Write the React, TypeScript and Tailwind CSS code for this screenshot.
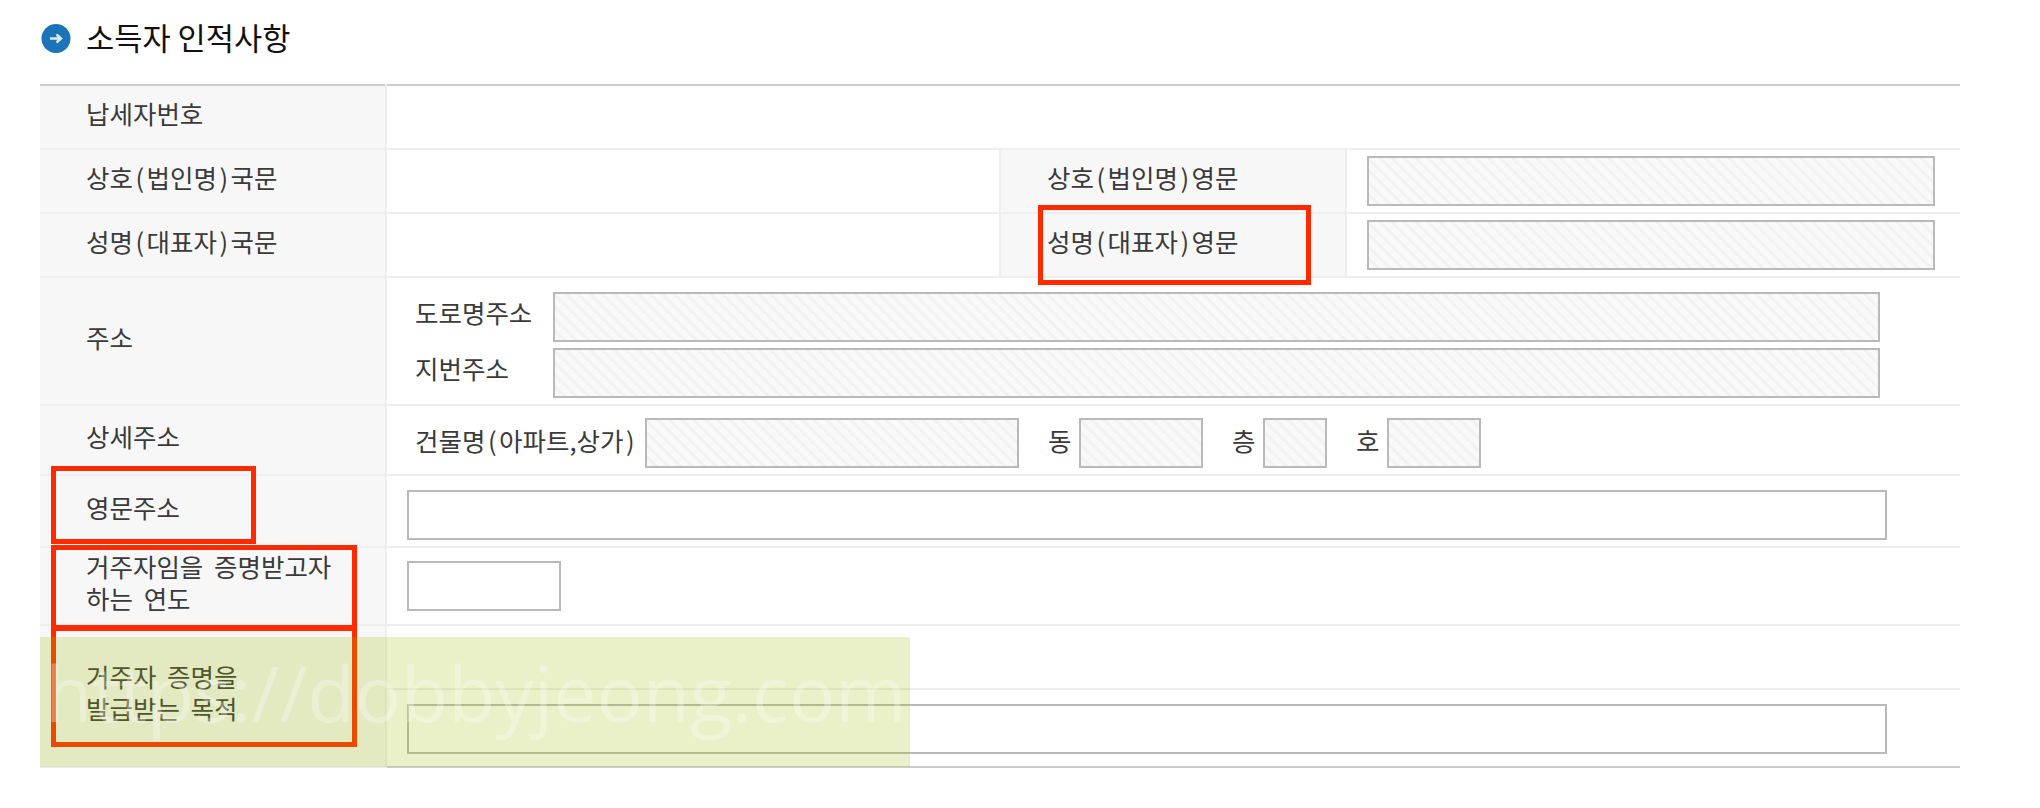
import React from 'react';

const labelFont = "font-['Noto_Sans_CJK_KR','Noto_Sans',sans-serif]";

const Hatched = ({ className }: { className: string }) => (
  <div
    className={`h-[50px] border-2 border-[#b9b9b9] bg-[repeating-linear-gradient(45deg,#f9f9f9_0px,#f9f9f9_4px,#f1f1f1_6px,#f1f1f1_7px,#f9f9f9_8.5px)] ${className}`}
  />
);

const Plain = ({ className }: { className: string }) => (
  <div className={`h-[50px] border-2 border-[#b9b9b9] bg-white ${className}`} />
);

const Paren = ({ children }: { children: React.ReactNode }) => <span className="mx-[2.5px]">{children}</span>;

const Label = ({ children, rowSpan, colSpan }: { children: React.ReactNode; rowSpan?: number; colSpan?: number }) => (
  <th
    rowSpan={rowSpan}
    colSpan={colSpan}
    className="border-r-2 border-b-2 border-[#eeeeee] bg-[#f7f7f7] pb-[9px] pl-[46px] text-left align-middle font-normal [word-spacing:5px]"
  >
    {children}
  </th>
);

const Cell = ({ children, colSpan, rowSpan }: { children?: React.ReactNode; colSpan?: number; rowSpan?: number }) => (
  <td colSpan={colSpan} rowSpan={rowSpan} className="border-b-2 border-[#eeeeee] align-middle">
    {children}
  </td>
);

// 파란 원 + 화살표 아이콘
const TitleIcon = () => (
  <svg width="30" height="30" viewBox="0 0 30 30" className="shrink-0">
    <circle cx="15" cy="15.5" r="14.5" fill="#1c74b8" />
    <path d="M9 15.5h10M15.5 11.5l4.5 4-4.5 4" fill="none" stroke="#dbe9f5" strokeWidth="2.4" />
  </svg>
);

export default function App() {
  return (
    <div className={`relative h-[808px] w-[2040px] overflow-hidden bg-white text-[25.5px] leading-[32px] text-[#3a3a3a] ${labelFont}`}>
      <div className="flex items-center gap-[15px] pt-[22px] pl-[41px]">
        <TitleIcon />
        <h2 className="pb-[2px] text-[30.7px] leading-[30px] font-normal text-[#111111]">소득자 인적사항</h2>
      </div>

      <table className="mt-[30px] ml-[40px] w-[1920px] table-fixed border-collapse border-t-2 border-[#cccccc]">
        <colgroup>
          <col className="w-[346px]" />
          <col className="w-[614px]" />
          <col className="w-[346px]" />
          <col className="w-[614px]" />
        </colgroup>
        <tbody>
          <tr className="h-[64px]">
            <Label>납세자번호</Label>
            <Cell colSpan={3} />
          </tr>
          <tr className="h-[64px]">
            <Label>
              상호<Paren>(</Paren>법인명<Paren>)</Paren>국문
            </Label>
            <Cell />
            <th className="border-x-2 border-b-2 border-[#eeeeee] bg-[#f7f7f7] pb-[9px] pl-[46px] text-left font-normal">
              상호<Paren>(</Paren>법인명<Paren>)</Paren>영문
            </th>
            <Cell>
              <Hatched className="ml-[20px] w-[568px]" />
            </Cell>
          </tr>
          <tr className="h-[64px]">
            <Label>
              성명<Paren>(</Paren>대표자<Paren>)</Paren>국문
            </Label>
            <Cell />
            <th className="border-x-2 border-b-2 border-[#eeeeee] bg-[#f7f7f7] pb-[9px] pl-[46px] text-left font-normal">
              성명<Paren>(</Paren>대표자<Paren>)</Paren>영문
            </th>
            <Cell>
              <Hatched className="ml-[20px] w-[568px]" />
            </Cell>
          </tr>
          <tr className="h-[128px]">
            <Label>주소</Label>
            <Cell colSpan={3}>
              <div className="flex flex-col gap-[6px] pt-[7px] pl-[28px]">
                <div className="flex items-center">
                  <span className="w-[138px] pb-[9px]">도로명주소</span>
                  <Hatched className="w-[1327px]" />
                </div>
                <div className="flex items-center">
                  <span className="w-[138px] pb-[9px]">지번주소</span>
                  <Hatched className="w-[1327px]" />
                </div>
              </div>
            </Cell>
          </tr>
          <tr className="h-[70px]">
            <Label>상세주소</Label>
            <Cell colSpan={3}>
              <div className="flex items-center pt-[6px] pl-[28px]">
                <span className="w-[230px] pb-[6px] whitespace-nowrap">
                  건물명<Paren>(</Paren>아파트,상가<Paren>)</Paren>
                </span>
                <Hatched className="w-[374px]" />
                <span className="w-[60px] pb-[6px] pl-[29px]">동</span>
                <Hatched className="w-[124px]" />
                <span className="w-[60px] pb-[6px] pl-[29px]">층</span>
                <Hatched className="w-[64px]" />
                <span className="w-[60px] pb-[6px] pl-[29px]">호</span>
                <Hatched className="w-[94px]" />
              </div>
            </Cell>
          </tr>
          <tr className="h-[72px]">
            <Label>영문주소</Label>
            <Cell colSpan={3}>
              <div className="pt-[8px]">
                <Plain className="ml-[20px] w-[1480px]" />
              </div>
            </Cell>
          </tr>
          <tr className="h-[78px]">
            <Label>
              거주자임을 증명받고자
              <br />
              하는 연도
            </Label>
            <Cell colSpan={3}>
              <Plain className="ml-[20px] w-[154px]" />
            </Cell>
          </tr>
          <tr className="h-[64px]">
            <Label rowSpan={2}>
              거주자 증명을
              <br />
              발급받는 목적
            </Label>
            <Cell colSpan={3} />
          </tr>
          <tr className="h-[78px]">
            <td colSpan={3} className="border-b-2 border-[#cccccc] align-middle">
              <div className="pt-[2px]">
                <Plain className="ml-[20px] w-[1480px]" />
              </div>
            </td>
          </tr>
        </tbody>
      </table>

      {/* 빨간 강조 박스 */}
      <div className="absolute top-[205px] left-[1038px] h-[80px] w-[273px] border-[5px] border-[#ff2a00]" />
      <div className="absolute top-[466px] left-[51px] h-[78px] w-[205px] border-[5px] border-[#ff2a00]" />
      <div className="absolute top-[545px] left-[51px] h-[85px] w-[306px] border-[5px] border-[#ff2a00]" />
      <div className="absolute top-[626px] left-[51px] h-[121px] w-[306px] border-[5px] border-[#ff2a00]" />

      {/* 워터마크 */}
      <div className="absolute top-[637px] left-[40px] h-[130px] w-[870px] overflow-hidden bg-[#9fba00]/[0.22]">
        <span className="ml-[5px] block font-['Open_Sans',sans-serif] text-[77px] leading-[112px] font-normal whitespace-nowrap text-white/30">
          https://dobbyjeong.com
        </span>
      </div>
    </div>
  );
}
